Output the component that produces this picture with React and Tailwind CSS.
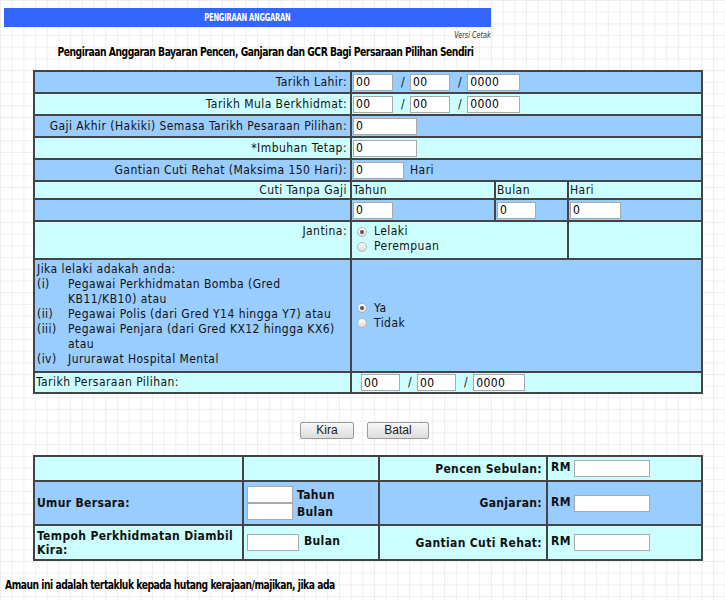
import React from 'react'

const cond = "font-['DejaVu_Sans_Condensed','DejaVu_Sans',sans-serif]"

function Box({ w, value = '' }) {
  return (
    <input
      readOnly
      defaultValue={value}
      style={{ width: w }}
      className="h-[17px] border border-[#a9a9a9] bg-white px-[2px] text-[12px] leading-[15px] tracking-[0.4px] text-black outline-none"
    />
  )
}

function Slash() {
  return <span className="ml-[8px] mr-[5px]">/</span>
}

function DateBoxes() {
  return (
    <div className="flex items-center">
      <Box w={40} value="00" />
      <Slash />
      <Box w={40} value="00" />
      <Slash />
      <Box w={53} value="0000" />
    </div>
  )
}

function Radio({ checked }) {
  return (
    <span className="inline-flex h-[10px] w-[10px] shrink-0 items-center justify-center rounded-full border border-[#b5b5b5] bg-gradient-to-b from-[#fdfdfd] to-[#dcdcdc]">
      {checked && <span className="h-[4px] w-[4px] rounded-full bg-[#555]" />}
    </span>
  )
}

function RadioLine({ checked, children }) {
  return (
    <div className="flex h-[15px] items-center">
      <Radio checked={checked} />
      <span className="ml-[7px]">{children}</span>
    </div>
  )
}

const blue = 'bg-[#99ccff]'
const cyan = 'bg-[#ccffff]'

export default function App() {
  return (
    <div
      className={`min-h-[600px] w-full bg-white bg-[linear-gradient(to_right,#eeeeee_1px,transparent_1px),linear-gradient(to_bottom,#eeeeee_1px,transparent_1px)] bg-size-[11.7px_11.7px] pt-[8px] text-[#111] ${cond}`}
    >
      <div className="ml-[4px] flex h-[19px] w-[487px] items-center justify-center bg-[#3366ff] text-[10px] leading-[12px] text-white">
        <span className="inline-block origin-center scale-x-[0.75] whitespace-nowrap font-bold tracking-[-0.3px]">
          PENGIRAAN ANGGARAN
        </span>
      </div>
      <div className="mt-[2px] w-[491px] text-right text-[9px] leading-[12px]">
        <span className="inline-block origin-right scale-x-[0.8] whitespace-nowrap italic text-[#333]">
          Versi Cetak
        </span>
      </div>
      <h1 className="mt-[3px] w-[531px] origin-center scale-x-[0.787] whitespace-nowrap text-center text-[13px] font-bold leading-[16px] tracking-[-0.6px] text-black">
        Pengiraan Anggaran Bayaran Pencen, Ganjaran dan GCR Bagi Persaraan Pilihan Sendiri
      </h1>

      <table className="ml-[33px] mt-[10px] w-[670px] table-fixed border-separate border-spacing-[2px] bg-[#444] text-[12px] leading-[15px] tracking-[0.45px]">
        <colgroup>
          <col className="w-[315px]" />
          <col className="w-[142px]" />
          <col className="w-[71px]" />
          <col className="w-[132px]" />
        </colgroup>
        <tbody>
          <tr>
            <td className={`${blue} h-[20px] p-0 pr-[3px] text-right`}>Tarikh Lahir:</td>
            <td colSpan={3} className={`${blue} p-0 pl-[1px]`}><DateBoxes /></td>
          </tr>
          <tr>
            <td className={`${cyan} h-[20px] p-0 pr-[3px] text-right`}>Tarikh Mula Berkhidmat:</td>
            <td colSpan={3} className={`${cyan} p-0 pl-[1px]`}><DateBoxes /></td>
          </tr>
          <tr>
            <td className={`${blue} h-[20px] p-0 pr-[3px] text-right`}>Gaji Akhir (Hakiki) Semasa Tarikh Pesaraan Pilihan:</td>
            <td colSpan={3} className={`${blue} p-0 pl-[1px]`}><Box w={64} value="0" /></td>
          </tr>
          <tr>
            <td className={`${cyan} h-[20px] p-0 pr-[3px] text-right`}>*Imbuhan Tetap:</td>
            <td colSpan={3} className={`${cyan} p-0 pl-[1px]`}><Box w={64} value="0" /></td>
          </tr>
          <tr>
            <td className={`${blue} h-[20px] p-0 pr-[3px] text-right`}>Gantian Cuti Rehat (Maksima 150 Hari):</td>
            <td colSpan={3} className={`${blue} p-0 pl-[1px]`}>
              <div className="flex items-center">
                <Box w={51} value="0" />
                <span className="ml-[6px]">Hari</span>
              </div>
            </td>
          </tr>
          <tr>
            <td className={`${cyan} h-[16px] p-0 pr-[3px] text-right`}>Cuti Tanpa Gaji</td>
            <td className={`${cyan} p-0 pl-[1px]`}>Tahun</td>
            <td className={`${cyan} p-0 pl-[1px]`}>Bulan</td>
            <td className={`${cyan} p-0 pl-[1px]`}>Hari</td>
          </tr>
          <tr>
            <td className={`${blue} h-[20px] p-0`}></td>
            <td className={`${blue} p-0 pl-[1px]`}><Box w={40} value="0" /></td>
            <td className={`${blue} p-0 pl-[1px]`}><Box w={39} value="0" /></td>
            <td className={`${blue} p-0 pl-[1px]`}><Box w={51} value="0" /></td>
          </tr>
          <tr>
            <td className={`${cyan} h-[36px] p-0 pr-[3px] pt-[2px] align-top text-right`}>Jantina:</td>
            <td colSpan={2} className={`${cyan} p-0 pl-[5px] pt-[2px] align-top`}>
              <RadioLine checked>Lelaki</RadioLine>
              <RadioLine>Perempuan</RadioLine>
            </td>
            <td className={`${cyan} p-0`}></td>
          </tr>
          <tr>
            <td className={`${blue} h-[111px] p-0 pl-[2px] pt-[2px] align-top`}>
              <div>Jika lelaki adakah anda:</div>
              <div className="grid grid-cols-[31px_1fr]">
                <span>(i)</span>
                <span>Pegawai Perkhidmatan Bomba (Gred<br />KB11/KB10) atau</span>
                <span>(ii)</span>
                <span>Pegawai Polis (dari Gred Y14 hingga Y7) atau</span>
                <span>(iii)</span>
                <span>Pegawai Penjara (dari Gred KX12 hingga KX6)<br />atau</span>
                <span>(iv)</span>
                <span>Jururawat Hospital Mental</span>
              </div>
            </td>
            <td colSpan={3} className={`${blue} p-0 pl-[5px]`}>
              <RadioLine checked>Ya</RadioLine>
              <RadioLine>Tidak</RadioLine>
            </td>
          </tr>
          <tr>
            <td className={`${cyan} h-[19px] p-0 pl-[1px]`}>Tarikh Persaraan Pilihan:</td>
            <td colSpan={3} className={`${cyan} p-0 pl-[9px]`}>
              <div className="flex items-center">
                <Box w={39} value="00" />
                <Slash />
                <Box w={39} value="00" />
                <Slash />
                <Box w={52} value="0000" />
              </div>
            </td>
          </tr>
        </tbody>
      </table>

      <div className="ml-[33px] mt-[28px] flex w-[670px] justify-center gap-[13px] pr-[7px]">
        <button className="h-[17px] w-[54px] rounded-[2px] border border-[#9a9a9a] bg-gradient-to-b from-[#f7f7f7] to-[#dddddd] font-['Liberation_Sans',sans-serif] text-[12px] leading-[15px] text-[#222]">
          Kira
        </button>
        <button className="h-[17px] w-[62px] rounded-[2px] border border-[#9a9a9a] bg-gradient-to-b from-[#f7f7f7] to-[#dddddd] font-['Liberation_Sans',sans-serif] text-[12px] leading-[15px] text-[#222]">
          Batal
        </button>
      </div>

      <table className="ml-[33px] mt-[16px] w-[670px] table-fixed border-separate border-spacing-[2px] bg-[#444] text-[12px] font-bold leading-[14px] tracking-[0.35px]">
        <colgroup>
          <col className="w-[207px]" />
          <col className="w-[134px]" />
          <col className="w-[166px]" />
          <col className="w-[153px]" />
        </colgroup>
        <tbody>
          <tr>
            <td className={`${cyan} h-[23px] p-0`}></td>
            <td className={`${cyan} p-0`}></td>
            <td className={`${cyan} p-0 pr-[4px] text-right`}>Pencen Sebulan:</td>
            <td className={`${cyan} p-0 pl-[3px]`}>
              <div className="flex items-center gap-[3px]">
                <span className="mb-[3px]">RM</span>
                <Box w={76} />
              </div>
            </td>
          </tr>
          <tr>
            <td className={`${blue} h-[42px] p-0 pl-[2px]`}>Umur Bersara:</td>
            <td className={`${blue} p-0 pl-[3px]`}>
              <div className="grid grid-cols-[46px_1fr] items-center gap-x-[4px]">
                <Box w={46} />
                <span>Tahun</span>
                <Box w={46} />
                <span>Bulan</span>
              </div>
            </td>
            <td className={`${blue} p-0 pr-[4px] text-right`}>Ganjaran:</td>
            <td className={`${blue} p-0 pl-[3px]`}>
              <div className="flex items-center gap-[3px]">
                <span className="mb-[3px]">RM</span>
                <Box w={76} />
              </div>
            </td>
          </tr>
          <tr>
            <td className={`${cyan} h-[33px] p-0 pl-[2px]`}>Tempoh Perkhidmatan Diambil<br />Kira:</td>
            <td className={`${cyan} p-0 pl-[3px]`}>
              <div className="flex items-center gap-[5px]">
                <Box w={52} />
                <span className="mb-[3px]">Bulan</span>
              </div>
            </td>
            <td className={`${cyan} p-0 pr-[4px] text-right`}>Gantian Cuti Rehat:</td>
            <td className={`${cyan} p-0 pl-[3px]`}>
              <div className="flex items-center gap-[3px]">
                <span className="mb-[3px]">RM</span>
                <Box w={76} />
              </div>
            </td>
          </tr>
        </tbody>
      </table>

      <p className="ml-[5px] mt-[16px] origin-left scale-x-[0.785] whitespace-nowrap text-[13px] font-bold leading-[16px] tracking-[-0.6px] text-black">
        Amaun ini adalah tertakluk kepada hutang kerajaan/majikan, jika ada
      </p>
    </div>
  )
}
